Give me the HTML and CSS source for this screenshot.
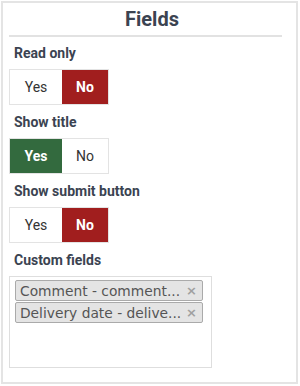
FILE: index.html
```html
<!DOCTYPE html>
<html lang="en">
<head>
  <meta charset="UTF-8">
  <meta name="viewport" content="width=device-width, initial-scale=1.0">
  <title>Fields</title>
  <link rel="stylesheet" href="styles.css">
</head>
<body>

  <div class="panel">
    <h2 class="panel-title">Fields</h2>
    <hr class="divider">

    <div class="field">
      <div class="field-label">Read only</div>
      <div class="toggle">
        <span class="toggle-btn">Yes</span>
        <span class="toggle-btn no active">No</span>
      </div>
    </div>

    <div class="field">
      <div class="field-label">Show title</div>
      <div class="toggle">
        <span class="toggle-btn yes active">Yes</span>
        <span class="toggle-btn no">No</span>
      </div>
    </div>

    <div class="field">
      <div class="field-label">Show submit button</div>
      <div class="toggle">
        <span class="toggle-btn">Yes</span>
        <span class="toggle-btn no active">No</span>
      </div>
    </div>

    <div class="field">
      <div class="field-label">Custom fields</div>
      <div class="multi">
        <div class="tag"><span>Comment - comment...</span><span class="tag-x">×</span></div>
        <div class="tag"><span>Delivery date - delive...</span><span class="tag-x">×</span></div>
      </div>
    </div>
  </div>

</body>
</html>
```

FILE: styles.css
```css
body {
  margin: 0;
  font-family: Roboto, "Liberation Sans", sans-serif;
  background: #fff;
}

.panel {
  box-sizing: border-box;
  width: 297px;
  height: 383px;
  margin: 1px 0 0 1px;
  border: 2px solid #e4e4e4;
  padding: 4px 14px 0 6px;
}

.panel-title {
  margin: 0;
  padding-left: 13px;
  font-size: 20px;
  line-height: 24px;
  font-weight: 700;
  color: #3b4351;
  text-align: center;
}

.divider {
  margin: 4px 0 0 0;
  height: 2px;
  border: 0;
  background: #e2e2e2;
}

.field {
  margin-top: 6px;
  margin-bottom: 7px;
}

.field-label {
  padding-left: 5px;
  font-size: 14px;
  line-height: 20px;
  font-weight: 700;
  color: #3b4351;
  margin-bottom: 6px;
}

.toggle {
  display: inline-flex;
  height: 36px;
  border: 1px solid #e3e3e3;
  box-sizing: border-box;
}

.toggle-btn {
  display: flex;
  align-items: center;
  justify-content: center;
  width: 52px;
  font-size: 14px;
  color: #333;
}

.toggle-btn.no {
  width: 46px;
}

.toggle-btn.active {
  color: #fff;
  font-weight: 700;
  background: #a11e1e;
}

.toggle-btn.yes.active {
  background: #336a3e;
}

.multi {
  box-sizing: border-box;
  width: 203px;
  height: 92px;
  border: 1px solid #dedede;
  padding: 3px 0 0 5px;
}

.tag {
  box-sizing: border-box;
  display: flex;
  justify-content: space-between;
  align-items: center;
  width: 188px;
  height: 21px;
  margin-bottom: 1px;
  padding: 0 5px 0 4px;
  border: 1px solid #aaa;
  border-radius: 2px;
  background: #e4e4e4;
  font-family: "DejaVu Sans", Verdana, sans-serif;
  font-size: 13.8px;
  color: #555;
}

.tag-x {
  font-size: 13px;
  font-weight: 700;
  color: #a0a0a0;
}
```
